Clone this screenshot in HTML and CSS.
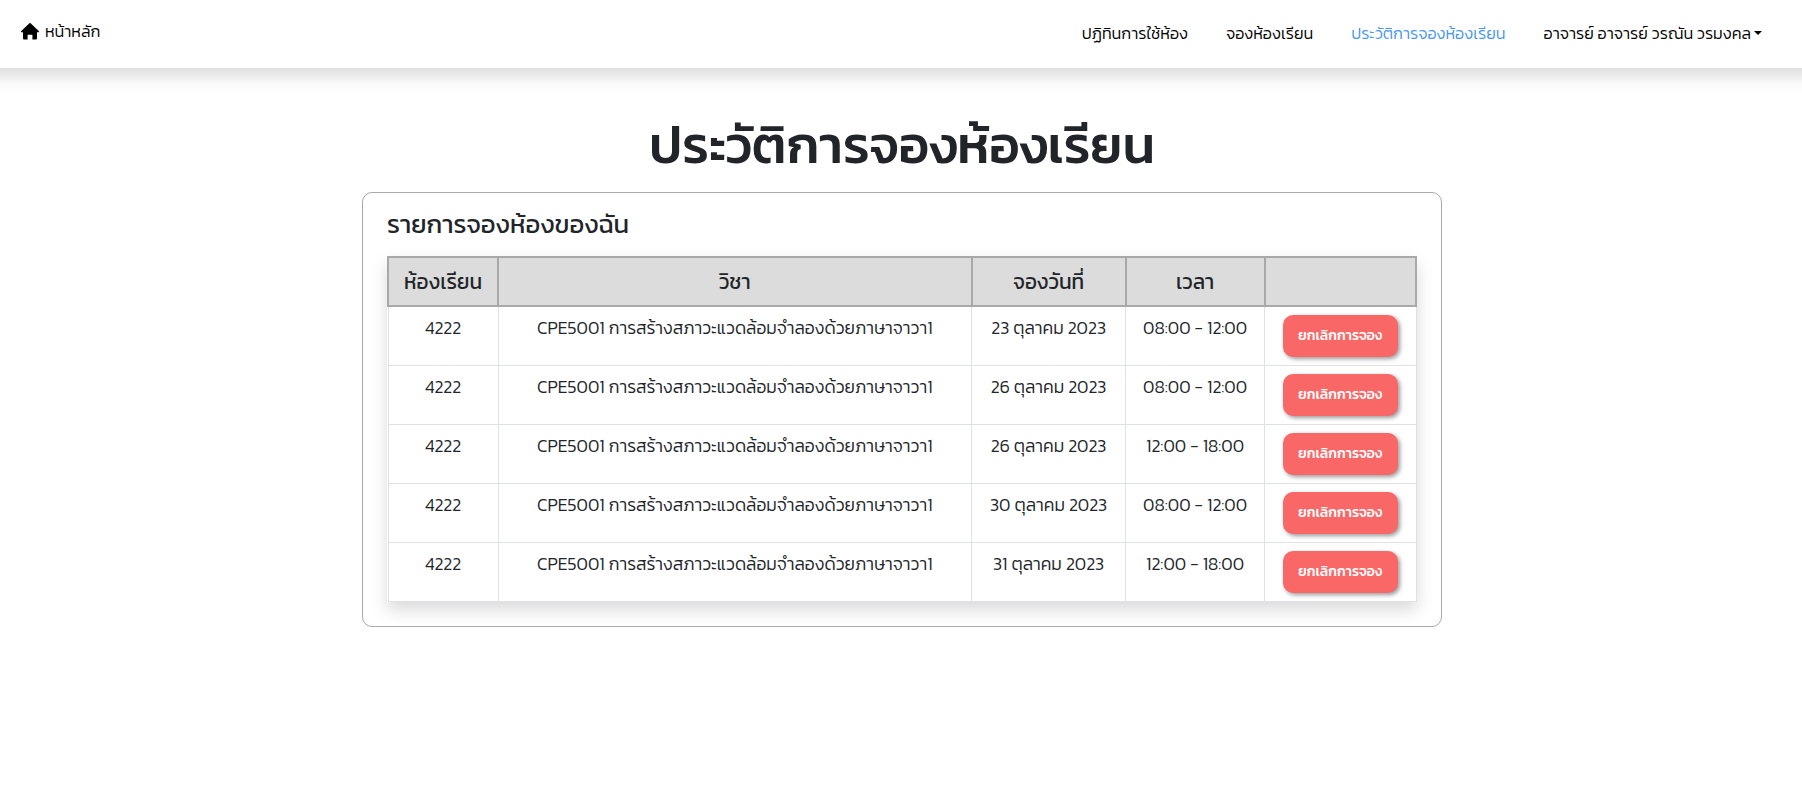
FILE: index.html
```html
<!DOCTYPE html>
<html lang="th">
<head>
<meta charset="utf-8">
<title>ประวัติการจองห้องเรียน</title>
<link rel="stylesheet" href="styles.css">
</head>
<body>
<header class="navbar">
  <a class="brand"><svg class="home" viewBox="0 0 18 17"><path d="M8.4.3a.8.8 0 0 1 1.2 0L17.7 8c.5.6.3 1.2-.4 1.2H16v6.2a1 1 0 0 1-1 1h-3.6v-4.6H6.6v4.6H3a1 1 0 0 1-1-1V9.200H.7C0 9.200-.2 8.600.3 8z"/></svg><span>หน้าหลัก</span></a>
  <nav class="menu">
    <a>ปฏิทินการใช้ห้อง</a>
    <a>จองห้องเรียน</a>
    <a class="active">ประวัติการจองห้องเรียน</a>
    <a class="user"><span>อาจารย์ อาจารย์ วรณัน วรมงคล</span><i class="caret"></i></a>
  </nav>
</header>
<main>
  <h1>ประวัติการจองห้องเรียน</h1>
  <section class="card">
    <h2>รายการจองห้องของฉัน</h2>
    <table>
      <colgroup><col class="c-room"><col class="c-subject"><col class="c-date"><col class="c-time"><col class="c-action"></colgroup>
      <thead><tr><th>ห้องเรียน</th><th>วิชา</th><th>จองวันที่</th><th>เวลา</th><th></th></tr></thead>
      <tbody>
        <tr><td>4222</td><td>CPE5001 การสร้างสภาวะแวดล้อมจำลองด้วยภาษาจาวา1</td><td>23 ตุลาคม 2023</td><td>08:00 - 12:00</td><td><button>ยกเลิกการจอง</button></td></tr>
        <tr><td>4222</td><td>CPE5001 การสร้างสภาวะแวดล้อมจำลองด้วยภาษาจาวา1</td><td>26 ตุลาคม 2023</td><td>08:00 - 12:00</td><td><button>ยกเลิกการจอง</button></td></tr>
        <tr><td>4222</td><td>CPE5001 การสร้างสภาวะแวดล้อมจำลองด้วยภาษาจาวา1</td><td>26 ตุลาคม 2023</td><td>12:00 - 18:00</td><td><button>ยกเลิกการจอง</button></td></tr>
        <tr><td>4222</td><td>CPE5001 การสร้างสภาวะแวดล้อมจำลองด้วยภาษาจาวา1</td><td>30 ตุลาคม 2023</td><td>08:00 - 12:00</td><td><button>ยกเลิกการจอง</button></td></tr>
        <tr><td>4222</td><td>CPE5001 การสร้างสภาวะแวดล้อมจำลองด้วยภาษาจาวา1</td><td>31 ตุลาคม 2023</td><td>12:00 - 18:00</td><td><button>ยกเลิกการจอง</button></td></tr>
      </tbody>
    </table>
  </section>
</main>
</body>
</html>
```
FILE: styles.css
```css
* { box-sizing: border-box; }
body { margin: 0; overflow-x: hidden; font-family: Kanit, "Noto Sans", sans-serif; color: #212529; background: #fff; }
.navbar { height: 68px; margin: 0 -24px; display: flex; justify-content: space-between; padding: 0 64px 0 45px; box-shadow: 0 8px 16px rgba(0,0,0,.15); color: #000; font-size: 16.2px; font-weight: 300; line-height: 24px; }
.brand, .menu, .user { display: flex; align-items: center; }
.brand { padding-bottom: 6px; }
.menu { gap: 38px; padding-bottom: 2px; }
.home { width: 18px; height: 17px; margin-right: 6px; }
.active { color: #4796f0; }
.caret { width: 8px; height: 4px; margin-left: 3px; border: 4px solid transparent; border-top-color: #000; border-bottom: 0; }
main { padding: 45px 0 0 2px; }
h1 { margin: 0 0 15px; text-align: center; font-size: 52.8px; line-height: 64px; font-weight: 500; }
.card { width: 1080px; height: 435px; margin: 0 auto; border: 1px solid #a9a9a9; border-radius: 10px; padding: 16px 24px; }
h2 { margin: 0 0 16px; font-size: 25.6px; line-height: 31px; font-weight: 400; }
table { width: 1030px; table-layout: fixed; border-collapse: collapse; box-shadow: 0 8px 16px rgba(0,0,0,.15); }
th { height: 49px; padding: 0; font-size: 20.8px; line-height: 31px; font-weight: 400; border: 2px solid #a9a9a9; background: #dcdcdc; }
td { height: 59px; padding: 8px 0 0; vertical-align: top; font-size: 17.6px; line-height: 26px; font-weight: 300; text-align: center; border: 1px solid #dee2e6; }
.c-room { width: 110px; }
.c-subject { width: 473.6px; }
.c-date { width: 154px; }
.c-time { width: 139px; }
button { display: block; width: 115px; height: 42px; margin: 0 auto; padding: 0 0 1px; border: 0; border-radius: 10px; background: #fa6767; color: #fff; font: 500 14px Kanit, "Noto Sans", sans-serif; box-shadow: 2px 2px 4px rgba(0,0,0,.4); }
```
